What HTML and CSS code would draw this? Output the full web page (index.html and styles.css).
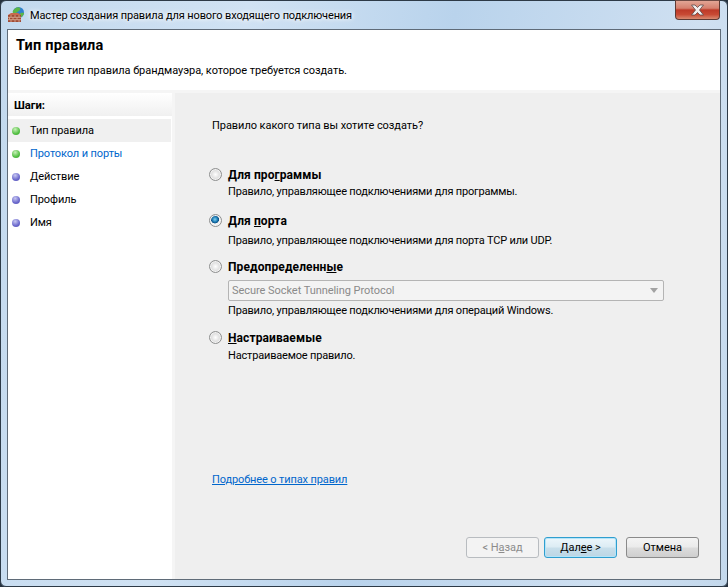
FILE: index.html
```html
<!DOCTYPE html>
<html lang="ru">
<head>
<meta charset="utf-8">
<title>Мастер создания правила</title>
<link rel="stylesheet" href="styles.css">
</head>
<body>
<div class="window">
  <div class="titlebar">
    <svg class="app-icon" width="17" height="16" viewBox="0 0 17 16">
      <circle cx="10.500" cy="5.500" r="5.500" fill="#2f7fd0"/>
      <path d="M7 1.500c2-1.500 4-1.500 5-.5s0 2-1 3-3 1-3 3-2 0-3-1 0-3 2-4.500zM12.500 6c1-.5 3-.5 3.500 0s-1 3-2.500 4-2-3-1-4z" fill="#5cb548"/>
      <path d="M3 6h7l3 2H0z" fill="#c9694c"/>
      <path d="M0 8h13v7H0z" fill="#a04a34"/>
      <path d="M0 10.300h13M0 12.700h13M3 8v2.300M7 8v2.300M11 8v2.300M1.500 10.300v2.400M5 10.300v2.400M9 10.300v2.400M3 12.700V15M7 12.700V15M11 12.700V15" stroke="#dcae98" stroke-width=".8" fill="none"/>
    </svg>
    <span class="title-text">Мастер создания правила для нового входящего подключения</span>
    <div class="close"><svg width="15" height="12" viewBox="0 0 15 12"><path d="M1.500 1h3.500l2.500 2.500L10 1h3.500l-4 5 4 5H10L7.500 8.500 5 11H1.500l4-5z" fill="#f2eeee" stroke="#5b4a4a" stroke-width=".8"/></svg></div>
  </div>
  <div class="client">
    <header class="head">
      <h1 class="head-title">Тип правила</h1>
      <p class="head-sub">Выберите тип правила брандмауэра, которое требуется создать.</p>
    </header>
    <div class="body">
      <aside class="steps">
        <div class="steps-head">Шаги:</div>
        <ul class="step-list">
          <li class="step current"><i class="dot green"></i>Тип правила</li>
          <li class="step next"><i class="dot green"></i>Протокол и порты</li>
          <li class="step"><i class="dot blue"></i>Действие</li>
          <li class="step"><i class="dot blue"></i>Профиль</li>
          <li class="step"><i class="dot blue"></i>Имя</li>
        </ul>
      </aside>
      <main class="panel">
        <p class="question">Правило какого типа вы хотите создать?</p>
        <div class="option opt1">
          <i class="radio"></i>
          <div class="opt-body">
            <div class="opt-title">Для про<u>г</u>раммы</div>
            <div class="opt-desc">Правило, управляющее подключениями для программы.</div>
          </div>
        </div>
        <div class="option opt2">
          <i class="radio checked"></i>
          <div class="opt-body">
            <div class="opt-title">Для <u>п</u>орта</div>
            <div class="opt-desc d2">Правило, управляющее подключениями для порта TCP или UDP.</div>
          </div>
        </div>
        <div class="option opt3">
          <i class="radio"></i>
          <div class="opt-body">
            <div class="opt-title">Предопределенн<u>ы</u>е</div>
            <div class="combo"><span>Secure Socket Tunneling Protocol</span><i class="arrow"></i></div>
            <div class="opt-desc d3">Правило, управляющее подключениями для операций Windows.</div>
          </div>
        </div>
        <div class="option opt4">
          <i class="radio"></i>
          <div class="opt-body">
            <div class="opt-title"><u>Н</u>астраиваемые</div>
            <div class="opt-desc d4">Настраиваемое правило.</div>
          </div>
        </div>
        <a class="more" href="#">Подробнее о типах правил</a>
        <div class="buttons">
          <button class="btn disabled" type="button">&lt; Н<u>а</u>зад</button>
          <button class="btn default" type="button">Дал<u>е</u>е &gt;</button>
          <button class="btn cancel" type="button">Отмена</button>
        </div>
      </main>
    </div>
  </div>
</div>
</body>
</html>
```
FILE: styles.css
```css
* { box-sizing: border-box; }
html, body { margin: 0; padding: 0; background: #26323f; }
body {
  width: 728px;
  height: 587px;
  overflow: hidden;
  font-family: Roboto, "Noto Sans", sans-serif;
  font-size: 11px;
  letter-spacing: -0.05px;
  color: #000;
}
.window {
  width: 728px;
  height: 587px;
  display: flex;
  flex-direction: column;
  border: 1px solid #2d3a47;
  border-radius: 6px;
  padding: 0 6px 6px;
  background: linear-gradient(100deg, #c3d9ee 0%, #d0e2f3 30%, #b9d3ec 55%, #cfe0f1 85%, #c3d8ec 100%);
  background-color: #b6d1ec;
}
.titlebar {
  height: 28px;
  flex: none;
  display: flex;
  align-items: flex-start;
  padding-left: 1px;
}
.app-icon { margin-top: 6px; flex: none; }
.title-text {
  margin-left: 5px;
  margin-top: 7px;
  font-size: 11px;
  letter-spacing: -0.12px;
  line-height: 16px;
  color: #000;
  text-shadow: 0 0 4px #fff, 0 0 6px #fff;
}
.close {
  margin-left: auto;
  margin-top: -1px;
  margin-right: 1px;
  width: 45px;
  height: 20px;
  display: flex;
  align-items: center;
  justify-content: center;
  border: 1px solid #5d3a34;
  border-top-color: #6d4a44;
  border-radius: 0 0 4px 4px;
  background: linear-gradient(#e2a595 0%, #d5806e 40%, #bd3a28 50%, #c84a34 75%, #d98a70 100%);
}
.client {
  flex: 1;
  display: flex;
  flex-direction: column;
  min-height: 0;
  border: 1px solid #5f6b78;
  background: #f5f5f5;
}
.head {
  height: 60px;
  flex: none;
  background: #fff;
  padding: 8px 0 0 8px;
}
.head-title {
  margin: 0;
  font-size: 14.500px;
  letter-spacing: 0.25px;
  font-weight: 700;
  line-height: 16px;
}
.head-sub { margin: 9px 0 0 -2px; line-height: 16px; }
.body {
  flex: 1;
  display: flex;
  min-height: 0;
  padding-top: 3px;
}
.steps {
  width: 164px;
  flex: none;
  background: #fff;
}
.steps-head {
  height: 23px;
  padding: 5px 0 0 6px;
  font-size: 11.300px;
  font-weight: 700;
  line-height: 16px;
  background: linear-gradient(#fff, #f0f0f0);
}
.step-list { list-style: none; margin: 3px 0 0; padding: 0; letter-spacing: -0.1px; }
.step {
  height: 23px;
  display: flex;
  align-items: center;
  line-height: 16px;
  padding-left: 4px;
  margin-right: 1px;
}
.step.current { background: #f0f0f0; }
.step.next { color: #0066cc; }
.dot {
  width: 8px;
  height: 8px;
  border-radius: 50%;
  margin-right: 10px;
  flex: none;
}
.dot.green { background: radial-gradient(circle at 40% 30%, #c8f0b8, #54c044 60%, #3da232); }
.dot.blue { background: radial-gradient(circle at 40% 30%, #c8c8f2, #6a68cc 60%, #5856b6); }
.panel {
  flex: 1;
  min-width: 0;
  margin-left: 3px;
  display: flex;
  flex-direction: column;
  padding-left: 34px;
  background: #efefef;
}
.question { margin: 25px 0 0 3px; line-height: 16px; }
.option { display: flex; }
.opt1 { margin-top: 33px; }
.opt2 { margin-top: 13px; }
.opt3 { margin-top: 10px; }
.opt4 { margin-top: 11px; }
.radio {
  width: 13px;
  height: 13px;
  margin: 1px 6px 0 0;
  border-radius: 50%;
  flex: none;
  border: 1px solid #8e8f8f;
  background: radial-gradient(circle at 50% 50%, #fff 0, #e4e4e4 45%, #c8c8c8 100%);
  box-shadow: inset 0 0 0 1px #f4f4f4;
}
.radio.checked {
  background: radial-gradient(circle at 45% 40%, #7fd0f2 0, #1a78b0 30%, #0c4f84 42%, #f4f4f4 48%, #e8e8e8 100%);
}
.opt-title { font-weight: 700; font-size: 12px; letter-spacing: 0.1px; line-height: 16px; }
.opt-desc { letter-spacing: -0.18px; line-height: 16px; margin-top: 1px; }
.opt-desc.d2 { margin-top: 4px; }
.opt-desc.d3 { margin-top: 2px; }
.opt-desc.d4 { margin-top: 2px; }
.combo {
  width: 436px;
  height: 21px;
  margin-top: 5px;
  display: flex;
  align-items: center;
  justify-content: space-between;
  padding: 0 4px 0 3px;
  border: 1px solid #b4b4b4;
  border-radius: 2px;
  background: #f3f3f3;
  color: #8a8a8a;
  line-height: 16px;
}
.arrow {
  width: 0;
  height: 0;
  margin-right: 1px;
  border-left: 4px solid transparent;
  border-right: 4px solid transparent;
  border-top: 5px solid #a2a2a2;
}
.more {
  margin-top: auto;
  margin-left: 3px;
  color: #0066cc;
  letter-spacing: -0.12px;
  line-height: 16px;
  text-decoration: underline;
  align-self: flex-start;
}
.buttons {
  display: flex;
  margin-top: 49px;
  margin-bottom: 21px;
  margin-left: 257px;
}
.btn {
  width: 73px;
  height: 21px;
  margin-right: 5px;
  padding: 0;
  font: inherit;
  letter-spacing: inherit;
  line-height: 16px;
  border-radius: 3px;
  border: 1px solid #8a8a8a;
  color: #000;
  background: linear-gradient(#f4f4f4 0, #ebebeb 48%, #dcdcdc 52%, #cfcfcf 100%);
}
.btn.disabled {
  border-color: #b8bcc0;
  background: #f3f3f3;
  color: #8c8c8c;
}
.btn.default {
  border-color: #2f9ecf;
  box-shadow: inset 0 0 0 1px #b4e4f8;
  background: linear-gradient(#ecf6fb 0, #dcecf4 48%, #c8dfeb 52%, #bcd6e4 100%);
}
.btn.cancel { margin-left: 4px; margin-right: 0; }
```
